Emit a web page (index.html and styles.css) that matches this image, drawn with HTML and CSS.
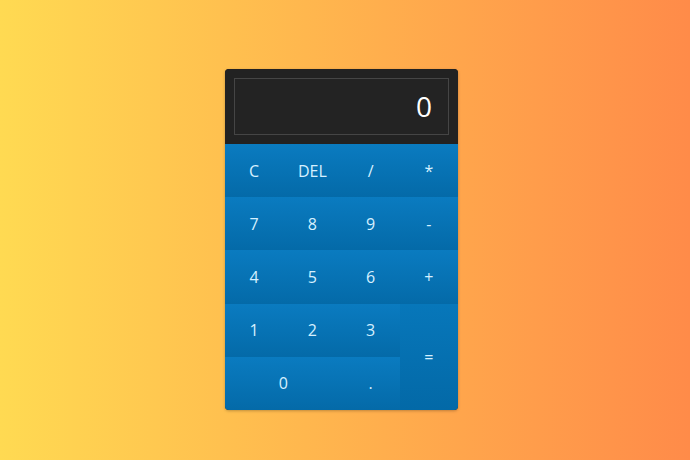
FILE: index.html
```html
<!DOCTYPE html>
<html>
<head>
<meta charset="utf-8">
<link rel="stylesheet" href="styles.css">
</head>
<body>
<div class="calc">
  <div class="screen">
    <div class="display">0</div>
  </div>
  <div class="keys">
    <div class="key">C</div>
    <div class="key">DEL</div>
    <div class="key">/</div>
    <div class="key">*</div>
    <div class="key">7</div>
    <div class="key">8</div>
    <div class="key">9</div>
    <div class="key">-</div>
    <div class="key">4</div>
    <div class="key">5</div>
    <div class="key">6</div>
    <div class="key">+</div>
    <div class="key">1</div>
    <div class="key">2</div>
    <div class="key">3</div>
    <div class="key equals">=</div>
    <div class="key zero">0</div>
    <div class="key">.</div>
  </div>
</div>
</body>
</html>
```
FILE: styles.css
```css
html, body {
  margin: 0;
  height: 100%;
}
body {
  background: linear-gradient(to right, #ffda52, #ff8b49);
  font-family: "Open Sans", "DejaVu Sans", sans-serif;
  display: flex;
  justify-content: center;
  padding-top: 69px;
  box-sizing: border-box;
}
.calc {
  width: 233px;
  height: 341px;
  border-radius: 4px;
  overflow: hidden;
  background: #222222;
  box-shadow: 0 1px 3px rgba(0,0,0,0.25);
  display: flex;
  flex-direction: column;
  margin-right: 7px;
}
.screen {
  padding: 9px;
  background: #222222;
}
.display {
  height: 55px;
  border: 1px solid #454545;
  background: #232323;
  color: #ffffff;
  font-size: 28px;
  line-height: 55px;
  text-align: right;
  padding-right: 16px;
}
.keys {
  flex: 1;
  display: grid;
  grid-template-columns: repeat(4, 1fr);
  grid-template-rows: repeat(5, 1fr);
}
.key {
  display: flex;
  align-items: center;
  justify-content: center;
  color: #d6f0ff;
  font-size: 16px;
  background: linear-gradient(#0a7bc0, #046aa8);
}
.zero {
  grid-column: span 2;
}
.equals {
  grid-column: 4;
  grid-row: 4 / span 2;
  background: linear-gradient(#0777ba, #0369a7);
}
```
